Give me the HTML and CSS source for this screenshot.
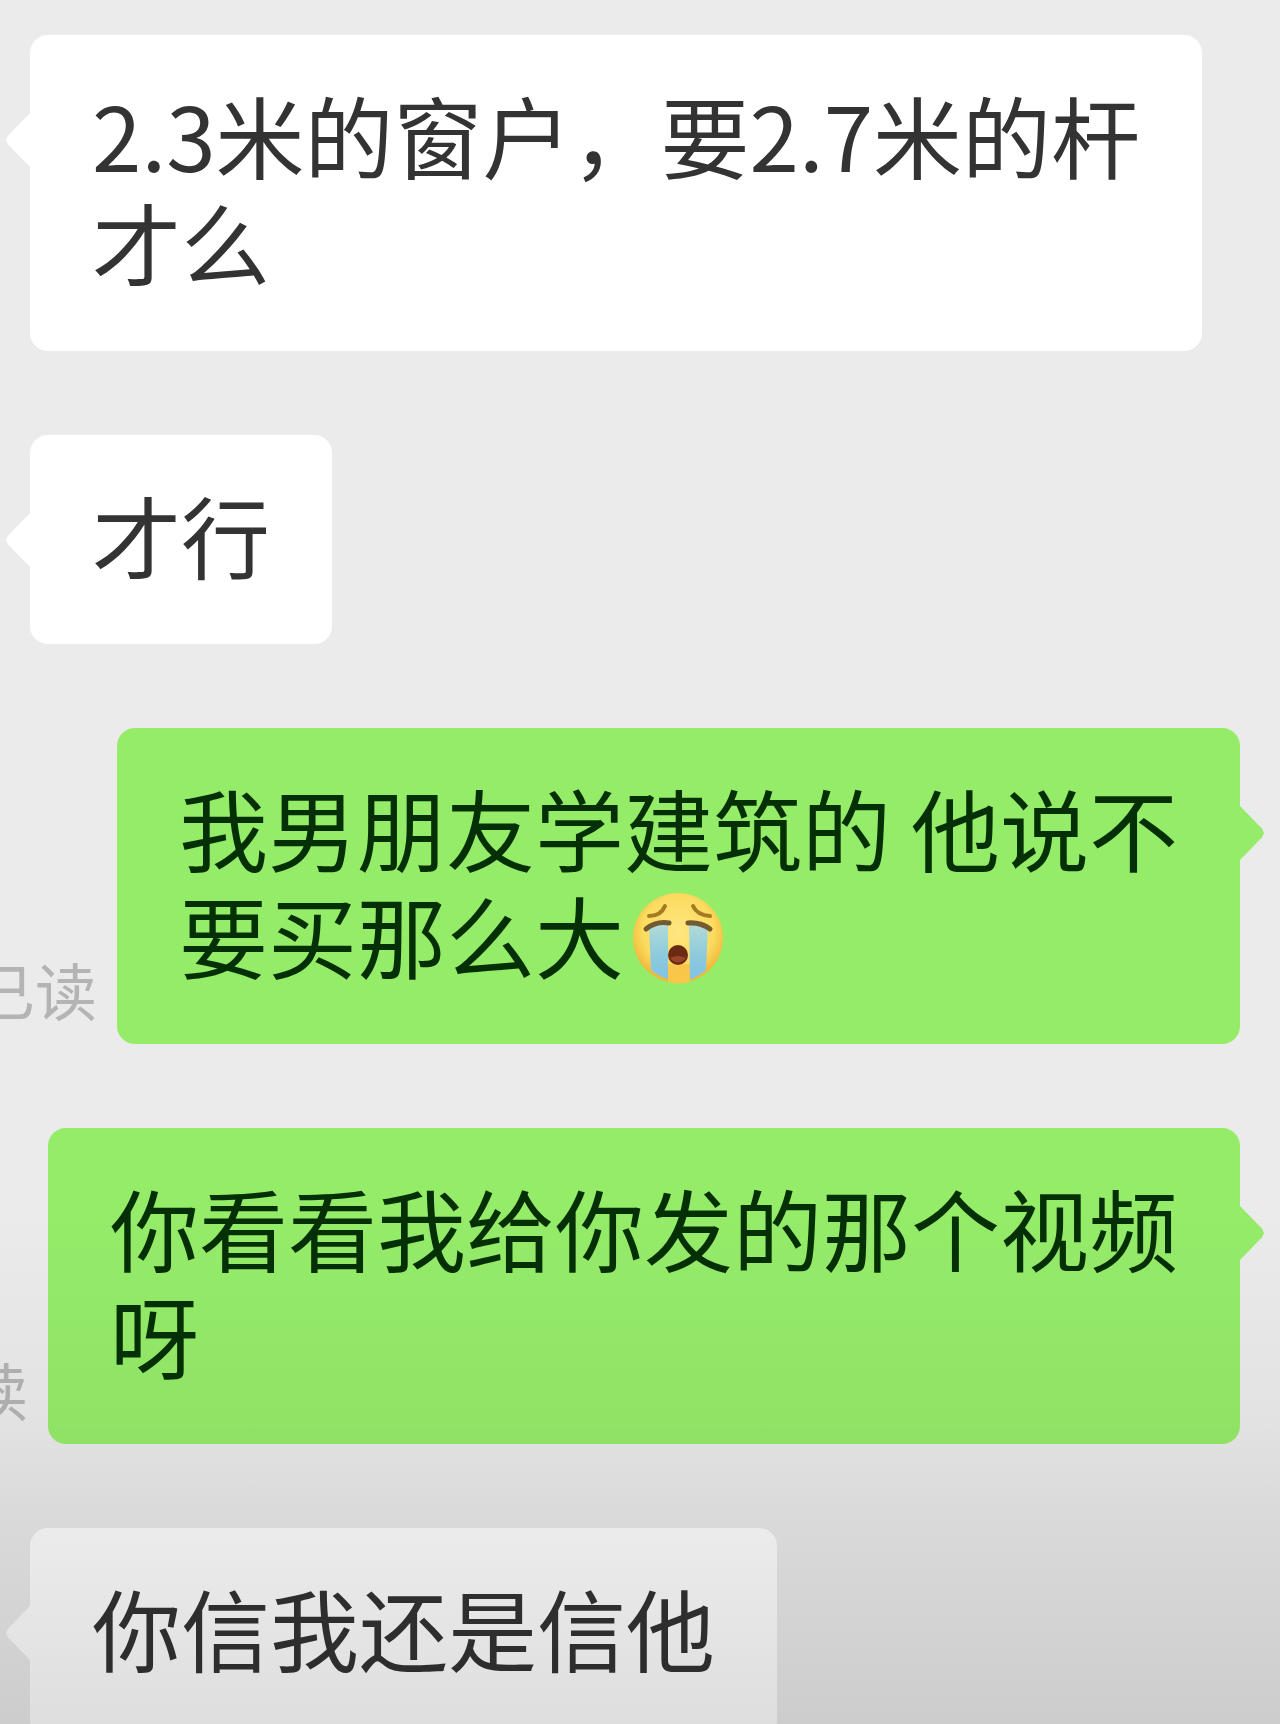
FILE: index.html
```html
<!DOCTYPE html>
<html lang="zh-CN">
<head>
    <meta charset="UTF-8">
    <meta name="viewport" content="width=device-width, initial-scale=1">
    <title>聊天</title>
    <link rel="stylesheet" href="styles.css">
</head>
<body>
    <ul class="chat">
        <li class="msg left">
            <p class="bubble">2.3米的窗户，要2.7米的杆<br>才么</p>
        </li>
        <li class="msg left">
            <p class="bubble">才行</p>
        </li>
        <li class="msg right">
            <div class="bubble">我男朋友学建筑的 他说不<br>要买那么大<svg class="emoji" viewBox="0 0 92 92" role="img" aria-label="大哭">
                <defs>
                    <radialGradient id="face" cx="50%" cy="42%" r="56%">
                        <stop offset="0" stop-color="#ffe680"/>
                        <stop offset="0.7" stop-color="#fbdc60"/>
                        <stop offset="1" stop-color="#f0b83a"/>
                    </radialGradient>
                    <linearGradient id="tear" x1="0" y1="0" x2="0" y2="1">
                        <stop offset="0" stop-color="#b4dcd8"/>
                        <stop offset="0.6" stop-color="#8cc9dc"/>
                        <stop offset="1" stop-color="#7fc4e6"/>
                    </linearGradient>
                </defs>
                <circle cx="46" cy="46" r="45" fill="url(#face)"/>
                <path d="M36 72h22v18q-12 3-22 0z" fill="#f8c648"/>
                <path d="M17 34q9-5 19-3v56q-8-2-17-9z" fill="url(#tear)"/>
                <path d="M57 31q10-2 19 3l-2 44q-8 7-16 9z" fill="url(#tear)"/>
                <g fill="none" stroke-linecap="round">
                    <path d="M17 24q12 0 16-10M78 24q-13-1-17-10" stroke="#a47a22" stroke-width="4"/>
                    <path d="M14 37q10-8 23-6M56 31q13-1 22 6" stroke="#745a30" stroke-width="5"/>
                </g>
                <circle cx="46" cy="63" r="10" fill="#6b2a12"/>
                <path d="M38 66q8-4 16 0q-8 9-16 0z" fill="#9a4429"/>
            </svg><span class="status">已读</span></div>
        </li>
        <li class="msg right">
            <div class="bubble">你看看我给你发的那个视频<br>呀<span class="status">已读</span></div>
        </li>
        <li class="msg left">
            <p class="bubble">你信我还是信他</p>
        </li>
    </ul>
</body>
</html>
```
FILE: styles.css
```css
*{
    box-sizing:border-box;
}
body,ul,li,p{
    padding:0;
    margin:0;
}
body{
    font:89px/107px "Noto Sans CJK SC",sans-serif;
    background-color:#ebebeb;
    color:#333;
}
ul{
    list-style:none;
}
.chat{
    position:relative;
    display:flex;
    flex-direction:column;
    gap:84px;
    height:100vh;
    padding:35px 40px 0 30px;
    overflow:hidden;
}
/* 底部渐暗 */
.chat::after{
    content:"";
    position:absolute;
    inset:0;
    background:linear-gradient(rgba(0,0,0,0) 70%,rgba(0,0,0,.035) 82%,rgba(0,0,0,.075) 88%,rgba(0,0,0,.13));
    pointer-events:none;
}
.msg{
    display:flex;
    flex:none;
}
.msg.right{
    justify-content:flex-end;
}
.bubble{
    position:relative;
    max-width:100%;
    padding:45px 62px 57px;
    border-radius:18px;
    background-color:#fff;
}
.right .bubble{
    background-color:#95ec69;
    color:#053005;
}
/* 气泡小三角 */
.bubble::before{
    content:"";
    position:absolute;
    top:78px;
    right:100%;
    width:24px;
    height:54px;
    background-color:inherit;
    clip-path:polygon(100% 0,8% 42%,0 50%,8% 58%,100% 100%);
}
.right .bubble::before{
    right:auto;
    left:100%;
    clip-path:polygon(0 0,92% 42%,100% 50%,92% 58%,0 100%);
}
.emoji{
    width:92px;
    height:92px;
    margin-left:8px;
    vertical-align:-12px;
}
.status{
    position:absolute;
    right:100%;
    bottom:19px;
    margin-right:20px;
    font-size:62px;
    line-height:72px;
    color:#b4b4b4;
    white-space:nowrap;
}
```
